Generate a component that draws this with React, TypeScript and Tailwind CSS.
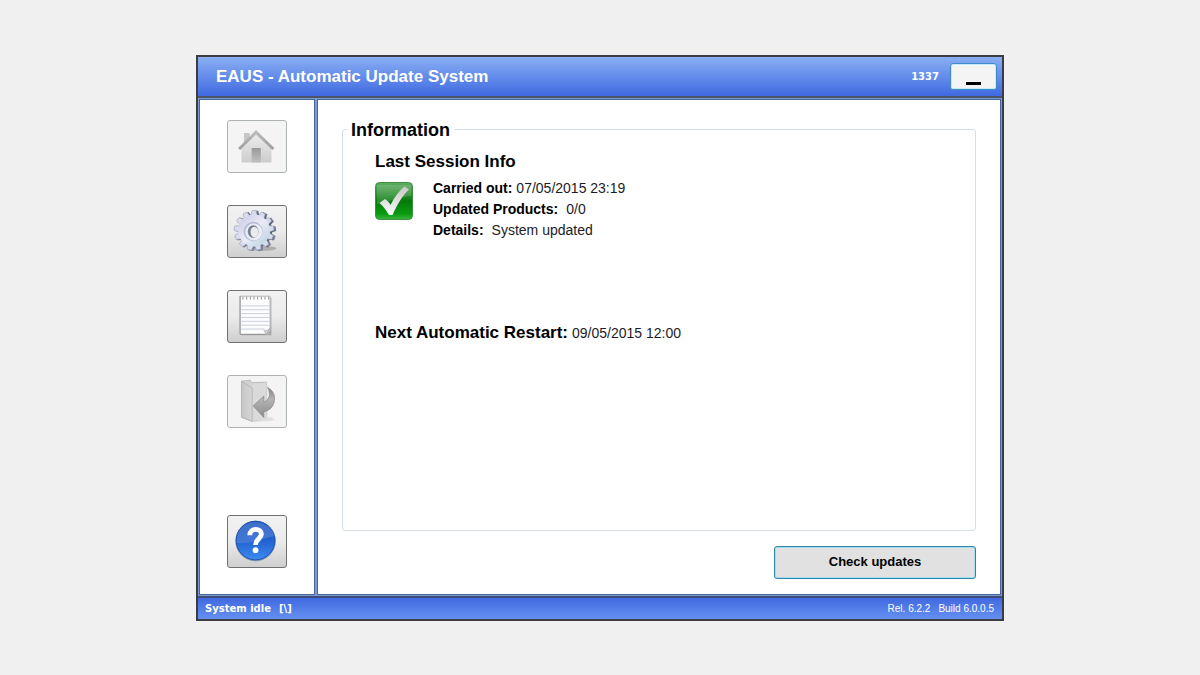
import type { ReactNode } from 'react';

type NavButtonProps = {
  label: string;
  disabled?: boolean;
  children: ReactNode;
};

const TEETH = [0, 1, 2, 3, 4, 5, 6, 7, 8, 9, 10, 11, 12];

function HomeIcon() {
  return (
    <svg width="60" height="53" viewBox="0 0 60 53" aria-hidden>
      <defs>
        <linearGradient id="home-wall" x1="0" y1="0" x2="0" y2="1">
          <stop offset="0" stopColor="#ececec" />
          <stop offset="1" stopColor="#cdcdcd" />
        </linearGradient>
        <linearGradient id="home-door" x1="0" y1="0" x2="0" y2="1">
          <stop offset="0" stopColor="#999999" />
          <stop offset="1" stopColor="#c0c0c0" />
        </linearGradient>
        <linearGradient id="home-roof" x1="0" y1="0" x2="0" y2="1">
          <stop offset="0" stopColor="#c0c0c0" />
          <stop offset="1" stopColor="#9c9c9c" />
        </linearGradient>
      </defs>
      <path d="M16.500 12.500h6v9l-6 5z" fill="#c6c6c6" />
      <path d="M14 43V28l15-15 16 15v15z" fill="url(#home-wall)" />
      <path d="M24.500 28h9.500v15h-9.500z" fill="url(#home-door)" />
      <path d="M29 9.500 L10.500 28 L12.500 30 L29 14 L46 30 L48 28 Z" fill="url(#home-roof)" />
    </svg>
  );
}

function GearIcon() {
  return (
    <svg width="60" height="53" viewBox="0 0 60 53" aria-hidden>
      <defs>
        <linearGradient id="gear-face" x1="0" y1="0" x2="1" y2="1">
          <stop offset="0" stopColor="#cbc6e8" />
          <stop offset=".5" stopColor="#e9ebf7" />
          <stop offset="1" stopColor="#b4d0dc" />
        </linearGradient>
        <linearGradient id="gear-edge" x1="0" y1="0" x2="1" y2="1">
          <stop offset="0" stopColor="#8f8fab" />
          <stop offset="1" stopColor="#435560" />
        </linearGradient>
      </defs>
      <ellipse cx="36" cy="44" rx="14" ry="2.500" fill="#8a8a8a" opacity=".55" />
      <g transform="translate(28.800 26)" fill="url(#gear-edge)">
        <circle r="17" />
        {TEETH.map((t) => (
          <path key={t} d="M-3.500-15.500 L-2.500-21 H2.500 L3.500-15.500Z" transform={`rotate(${(t * 360) / 13})`} />
        ))}
      </g>
      <g transform="translate(27 25.500)">
        {TEETH.map((t) => (
          <path
            key={t}
            d="M-3.500-14.500 L-2.200-20.500 H2.200 L3.500-14.500Z"
            fill="#d9dcec"
            stroke="#8d93a8"
            strokeWidth=".5"
            transform={`rotate(${(t * 360) / 13})`}
          />
        ))}
        <circle r="16.500" fill="url(#gear-face)" />
        <circle cx="-1" cy="1" r="10" fill="#b9bdd6" />
        <circle cx="-.3" cy="1.600" r="8.800" fill="#e9ecf5" />
        <ellipse cx="-1" cy="1" rx="5.500" ry="6.500" fill="#77808d" />
        <ellipse cx=".3" cy="1.500" rx="4" ry="5.500" fill="#ebebed" />
      </g>
    </svg>
  );
}

function NotepadIcon() {
  return (
    <svg width="60" height="53" viewBox="0 0 60 53" aria-hidden>
      <path d="M14 7h31v39H14z" fill="#777" opacity=".45" />
      <path d="M12.500 5.500h31v35l-4 4.500h-27z" fill="#fcfcfc" stroke="#b5b5b5" />
      <path d="M12.500 5.500V45H39" fill="none" stroke="#909090" />
      <path d="M15 7.500h28" stroke="#8c8c8c" strokeWidth="3" strokeDasharray="1 2.800" />
      <path d="M13 15.500h30M13 19.500h30M13 23.500h30M13 27.500h30M13 31.500h30M13 35.500h30M13 39.500h25" stroke="#c8cfdb" />
      <path d="M44 38l-5 7.500c0-2-1-4-2-4.500 3 1 5-1 7-3z" fill="#dedede" stroke="#999" strokeWidth=".6" />
    </svg>
  );
}

function ExitIcon() {
  return (
    <svg width="60" height="53" viewBox="0 0 60 53" aria-hidden>
      <defs>
        <linearGradient id="exit-folder" x1="0" y1="0" x2="1" y2="0">
          <stop offset="0" stopColor="#c6c6c6" />
          <stop offset="1" stopColor="#d6d6d6" />
        </linearGradient>
        <linearGradient id="exit-arrow" x1="0" y1="0" x2="0" y2="1">
          <stop offset="0" stopColor="#868686" />
          <stop offset=".4" stopColor="#b4b4b4" />
          <stop offset="1" stopColor="#8a8a8a" />
        </linearGradient>
      </defs>
      <path d="M25 44l20-1 4 3-22 2z" fill="#dedede" />
      <path d="M14 5.500l9-1 2 2.500 15-.5V43l-15 4-11-4z" fill="#d2d2d2" stroke="#bcbcbc" />
      <path d="M24 11l3-3 13-1v37l-15 3z" fill="#dadada" />
      <path d="M14 5.500l11 7V47l-11-4.500z" fill="url(#exit-folder)" stroke="#b6b6b6" />
      <path
        d="M41 12c6 3 8.500 9 6.500 16-1.500 5-5 8-10.500 9v6L26 31l11-10v6c6-2 7.500-8 4-15z"
        fill="url(#exit-arrow)"
        stroke="#858585"
        strokeWidth=".7"
      />
    </svg>
  );
}

function HelpIcon() {
  return (
    <svg width="60" height="53" viewBox="0 0 60 53" aria-hidden>
      <defs>
        <linearGradient id="help-ball" x1="0" y1="0" x2="0" y2="1">
          <stop offset="0" stopColor="#2058c0" />
          <stop offset=".5" stopColor="#2262d0" />
          <stop offset="1" stopColor="#3d8bf2" />
        </linearGradient>
      </defs>
      <circle cx="28.500" cy="26" r="21" fill="#8a9bb5" />
      <circle cx="28.500" cy="25.500" r="20" fill="url(#help-ball)" stroke="#1a50ad" />
      <path d="M9 28C8 14 17 6.500 28 6.500s19 6.500 20 14.500c-11 1-20 8-39 7z" fill="#fff" opacity=".14" />
      <path d="M22.500 20C22.500 11.500 35 12.500 34.500 19c-.3 4.500-6 5-6 11" fill="none" stroke="#fff" strokeWidth="5" />
      <circle cx="28.500" cy="35.500" r="3" fill="#fff" />
    </svg>
  );
}

function CheckIcon() {
  return (
    <svg width="38" height="38" viewBox="0 0 38 38" className="shrink-0" role="img" aria-label="OK">
      <defs>
        <linearGradient id="ok-tile" x1="0" y1="0" x2="0" y2="1">
          <stop offset="0" stopColor="#5fae62" />
          <stop offset=".3" stopColor="#2c8f31" />
          <stop offset=".5" stopColor="#067a0b" />
          <stop offset=".85" stopColor="#0a9b10" />
          <stop offset="1" stopColor="#3bb541" />
        </linearGradient>
        <linearGradient id="ok-mark" x1="0" y1="0" x2="0" y2="1">
          <stop offset="0" stopColor="#c8c8c8" />
          <stop offset="1" stopColor="#fafafa" />
        </linearGradient>
      </defs>
      <rect x=".5" y=".5" width="37" height="37" rx="4" fill="url(#ok-tile)" stroke="#3f8f43" />
      <path d="M2 3h34v11C26 14 16 20 2 22z" fill="#fff" opacity=".15" />
      <path d="M4.500 21l5.500-4c3 2 4.500 4 5.500 6C19 16 24 9 29.500 4.500l4.500 3C27 14 22 23 17.500 33H14C11 28 9 25 4.500 21z" fill="url(#ok-mark)" />
    </svg>
  );
}

function NavButton({ label, disabled = false, children }: NavButtonProps) {
  return (
    <button
      type="button"
      aria-label={label}
      disabled={disabled}
      className="flex h-[53px] w-[60px] items-center justify-center overflow-hidden rounded-[3px] border border-[#707070] bg-linear-to-b from-[#f2f2f2] from-0% via-[#ebebeb] via-50% to-[#cfcfcf] disabled:border-[#adb2b5] disabled:bg-[#f4f4f4] disabled:bg-none"
    >
      {children}
    </button>
  );
}

export default function App() {
  return (
    <div className="flex min-h-screen items-center justify-center bg-[#f0f0f0] font-['Liberation_Sans',Arial,sans-serif] text-black">
      <div className="flex w-full max-w-[808px] flex-col border-2 border-[#3a3d42]">
        <header className="flex h-[41px] items-center justify-between border-b-2 border-[#4c5568] bg-linear-to-b from-[#8aaef2] to-[#4169e1] pr-[5px] pl-[18px] text-white">
          <h1 className="pt-px text-[17px] font-bold">EAUS - Automatic Update System</h1>
          <div className="flex items-center gap-[11px]">
            <span className="pt-px font-['DejaVu_Sans',sans-serif] text-[10px] font-bold">1337</span>
            <button
              type="button"
              aria-label="Minimize"
              className="flex h-[27px] w-[47px] items-end justify-center rounded-[3px] border border-[#3c8ccc] bg-[#f4f4f4] pb-1 inset-ring inset-ring-[#c3e9fa]"
            >
              <span className="h-[3px] w-[15px] bg-black" />
            </button>
          </div>
        </header>

        <div className="flex border border-[#7d9bcb] bg-[#7d9bcb] gap-[2px]">
          <nav className="flex w-[116px] shrink-0 flex-col items-center gap-8 border border-[#43659f] bg-white pt-5 pb-[26px]">
            <NavButton label="Home" disabled>
              <HomeIcon />
            </NavButton>
            <NavButton label="Settings">
              <GearIcon />
            </NavButton>
            <NavButton label="Log">
              <NotepadIcon />
            </NavButton>
            <NavButton label="Exit" disabled>
              <ExitIcon />
            </NavButton>
            <div className="mt-auto">
              <NavButton label="Help">
                <HelpIcon />
              </NavButton>
            </div>
          </nav>

          <main className="flex min-w-0 flex-1 flex-col border border-[#43659f] bg-white px-6 pt-[18px] pb-[15px]">
            <fieldset className="min-h-[413px] rounded-[3px] border border-[#d5dfe5] pl-8">
              <legend className="-ml-7 px-1 text-lg/6 font-bold">Information</legend>
              <h2 className="mt-2 text-[17px]/6 font-bold">Last Session Info</h2>
              <div className="mt-1 flex gap-5">
                <div className="pt-1">
                  <CheckIcon />
                </div>
                <dl className="text-sm/[21px]">
                  <div className="flex gap-1">
                    <dt className="font-bold">Carried out:</dt>
                    <dd className="text-[#1c1c28]">07/05/2015 23:19</dd>
                  </div>
                  <div className="flex gap-2">
                    <dt className="font-bold">Updated Products:</dt>
                    <dd className="text-[#1c1c28]">0/0</dd>
                  </div>
                  <div className="flex gap-2">
                    <dt className="font-bold">Details:</dt>
                    <dd className="text-[#1c1c28]">System updated</dd>
                  </div>
                </dl>
              </div>
              <div className="mt-20 flex items-center gap-1">
                <h2 className="text-[17px]/6 font-bold">Next Automatic Restart:</h2>
                <span className="text-sm/6 text-[#1c1c28]">09/05/2015 12:00</span>
              </div>
            </fieldset>
            <button
              type="button"
              className="mt-[15px] h-[33px] w-[202px] self-end rounded-[3px] border border-[#2f86ab] bg-[#e1e1e1] text-[13px] font-bold inset-ring inset-ring-[#a5dcee]"
            >
              Check updates
            </button>
          </main>
        </div>

        <footer className="flex h-[23px] items-center justify-between border-t-2 border-[#3c4c78] bg-linear-to-b from-[#4169e1] to-[#6590ef] pr-2 pl-[7px] text-white">
          <span className="flex gap-2 font-['DejaVu_Sans',sans-serif] text-[10px] font-bold">
            <span>System idle</span>
            <span>[\]</span>
          </span>
          <span className="flex gap-2 text-[10px]">
            <span>Rel. 6.2.2</span>
            <span>Build 6.0.0.5</span>
          </span>
        </footer>
      </div>
    </div>
  );
}
